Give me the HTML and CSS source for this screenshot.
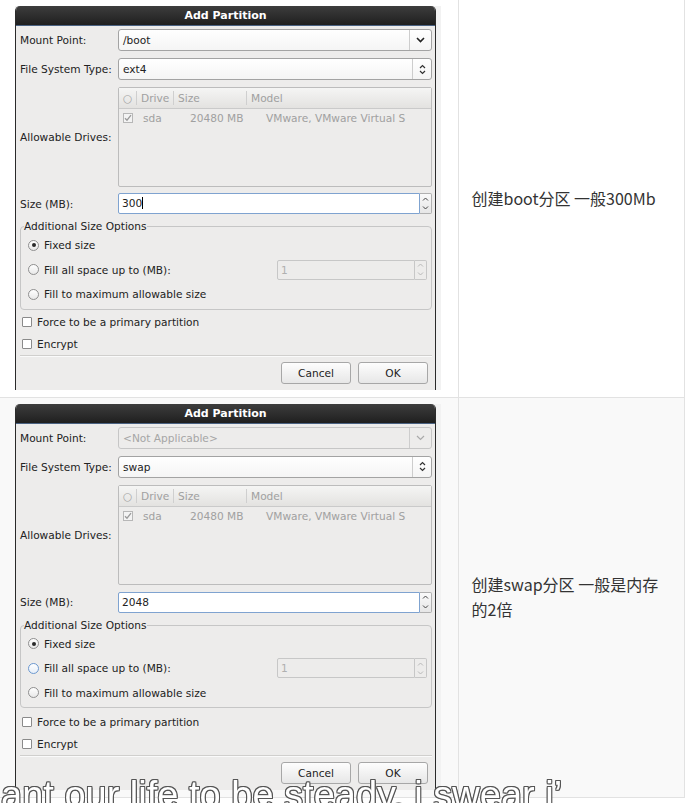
FILE: index.html
```html
<!DOCTYPE html>
<html lang="zh-CN">
<head>
    <meta charset="UTF-8">
    <meta name="viewport" content="width=device-width, initial-scale=1.0">
    <title>分区步骤</title>
    <link rel="stylesheet" href="styles.css">
</head>
<body>
    <table class="steps">
        <colgroup>
            <col class="col-pic">
            <col class="col-note">
        </colgroup>
        <tr>
            <td class="pic">
                <div class="shot">
                    <div class="dlg">
                        <div class="dlg-title">Add Partition</div>
                        <div class="dlg-body">
                            <div class="field">
                                <span class="lbl">Mount Point:</span>
                                <div class="combo">
                                    <span class="combo-text">/boot</span>
                                    <span class="combo-btn"><svg width="9" height="6" viewBox="0 0 9 6"><path d="M1 1l3.5 3.5L8 1" fill="none" stroke="#222" stroke-width="1.6"/></svg></span>
                                </div>
                            </div>
                            <div class="field">
                                <span class="lbl">File System Type:</span>
                                <div class="combo">
                                    <span class="combo-text">ext4</span>
                                    <span class="combo-btn narrow"><svg width="7" height="11" viewBox="0 0 7 11"><path d="M1 4l2.5-2.5L6 4M1 7l2.5 2.5L6 7" fill="none" stroke="#333" stroke-width="1.2"/></svg></span>
                                </div>
                            </div>
                            <div class="field">
                                <span class="lbl">Allowable Drives:</span>
                                <div class="drives">
                                    <div class="drives-head">
                                        <span class="h-radio">○</span>
                                        <span class="h-cell h-drive">Drive</span>
                                        <span class="h-cell h-size">Size</span>
                                        <span class="h-cell">Model</span>
                                    </div>
                                    <div class="drives-row">
                                        <span class="tick"><svg width="8" height="8" viewBox="0 0 8 8"><path d="M1 4.2l2 2L7 1.2" fill="none" stroke="#9a9a9a" stroke-width="1.3"/></svg></span>
                                        <span class="d-name">sda</span>
                                        <span class="d-size">20480 MB</span>
                                        <span>VMware, VMware Virtual S</span>
                                    </div>
                                </div>
                            </div>
                            <div class="field size-field">
                                <span class="lbl">Size (MB):</span>
                                <div class="spin">
                                    <span class="spin-field">300<i class="caret"></i></span>
                                    <span class="spin-arrows">
                                        <svg width="7" height="4" viewBox="0 0 7 4"><path d="M1 3.5l2.5-2.5L6 3.5" fill="none" stroke="#444" stroke-width="1"/></svg>
                                        <svg width="7" height="4" viewBox="0 0 7 4"><path d="M1 .5l2.5 2.5L6 .5" fill="none" stroke="#444" stroke-width="1"/></svg>
                                    </span>
                                </div>
                            </div>
                            <fieldset class="frame">
                                <legend>Additional Size Options</legend>
                                <div class="opt"><span class="radio on"></span>Fixed size</div>
                                <div class="opt">
                                    <span class="radio"></span>Fill all space up to (MB):
                                    <div class="spin off">
                                        <span class="spin-field">1</span>
                                        <span class="spin-arrows">
                                            <svg width="7" height="4" viewBox="0 0 7 4"><path d="M1 3.5l2.5-2.5L6 3.5" fill="none" stroke="#b8b8b8" stroke-width="1"/></svg>
                                            <svg width="7" height="4" viewBox="0 0 7 4"><path d="M1 .5l2.5 2.5L6 .5" fill="none" stroke="#b8b8b8" stroke-width="1"/></svg>
                                        </span>
                                    </div>
                                </div>
                                <div class="opt"><span class="radio"></span>Fill to maximum allowable size</div>
                            </fieldset>
                            <div class="check first"><span class="box"></span>Force to be a primary partition</div>
                            <div class="check"><span class="box"></span>Encrypt</div>
                            <div class="buttons">
                                <span class="btn">Cancel</span>
                                <span class="btn">OK</span>
                            </div>
                        </div>
                    </div>
                </div>
            </td>
            <td class="note">创建boot分区 一般300Mb</td>
        </tr>
        <tr>
            <td class="pic">
                <div class="shot">
                    <div class="dlg tall">
                        <div class="dlg-title">Add Partition</div>
                        <div class="dlg-body">
                            <div class="field">
                                <span class="lbl">Mount Point:</span>
                                <div class="combo off">
                                    <span class="combo-text">&lt;Not Applicable&gt;</span>
                                    <span class="combo-btn"><svg width="9" height="6" viewBox="0 0 9 6"><path d="M1 1l3.5 3.5L8 1" fill="none" stroke="#aaa" stroke-width="1.2"/></svg></span>
                                </div>
                            </div>
                            <div class="field">
                                <span class="lbl">File System Type:</span>
                                <div class="combo">
                                    <span class="combo-text">swap</span>
                                    <span class="combo-btn narrow"><svg width="7" height="11" viewBox="0 0 7 11"><path d="M1 4l2.5-2.5L6 4M1 7l2.5 2.5L6 7" fill="none" stroke="#333" stroke-width="1.2"/></svg></span>
                                </div>
                            </div>
                            <div class="field">
                                <span class="lbl">Allowable Drives:</span>
                                <div class="drives">
                                    <div class="drives-head">
                                        <span class="h-radio">○</span>
                                        <span class="h-cell h-drive">Drive</span>
                                        <span class="h-cell h-size">Size</span>
                                        <span class="h-cell">Model</span>
                                    </div>
                                    <div class="drives-row">
                                        <span class="tick"><svg width="8" height="8" viewBox="0 0 8 8"><path d="M1 4.2l2 2L7 1.2" fill="none" stroke="#9a9a9a" stroke-width="1.3"/></svg></span>
                                        <span class="d-name">sda</span>
                                        <span class="d-size">20480 MB</span>
                                        <span>VMware, VMware Virtual S</span>
                                    </div>
                                </div>
                            </div>
                            <div class="field size-field">
                                <span class="lbl">Size (MB):</span>
                                <div class="spin">
                                    <span class="spin-field">2048</span>
                                    <span class="spin-arrows">
                                        <svg width="7" height="4" viewBox="0 0 7 4"><path d="M1 3.5l2.5-2.5L6 3.5" fill="none" stroke="#444" stroke-width="1"/></svg>
                                        <svg width="7" height="4" viewBox="0 0 7 4"><path d="M1 .5l2.5 2.5L6 .5" fill="none" stroke="#444" stroke-width="1"/></svg>
                                    </span>
                                </div>
                            </div>
                            <fieldset class="frame">
                                <legend>Additional Size Options</legend>
                                <div class="opt"><span class="radio on"></span>Fixed size</div>
                                <div class="opt">
                                    <span class="radio hover"></span>Fill all space up to (MB):
                                    <div class="spin off">
                                        <span class="spin-field">1</span>
                                        <span class="spin-arrows">
                                            <svg width="7" height="4" viewBox="0 0 7 4"><path d="M1 3.5l2.5-2.5L6 3.5" fill="none" stroke="#b8b8b8" stroke-width="1"/></svg>
                                            <svg width="7" height="4" viewBox="0 0 7 4"><path d="M1 .5l2.5 2.5L6 .5" fill="none" stroke="#b8b8b8" stroke-width="1"/></svg>
                                        </span>
                                    </div>
                                </div>
                                <div class="opt"><span class="radio"></span>Fill to maximum allowable size</div>
                            </fieldset>
                            <div class="check first"><span class="box"></span>Force to be a primary partition</div>
                            <div class="check"><span class="box"></span>Encrypt</div>
                            <div class="buttons">
                                <span class="btn">Cancel</span>
                                <span class="btn">OK</span>
                            </div>
                        </div>
                    </div>
                </div>
            </td>
            <td class="note">创建swap分区 一般是内存的2倍</td>
        </tr>
    </table>

    <div class="lyric">ant our life to be steady, i swear i’</div>
</body>
</html>
```

FILE: styles.css
```css
body {
    margin: 0;
    background: #fff;
    font-family: "Noto Sans CJK SC", sans-serif;
}

.steps {
    border-collapse: collapse;
    table-layout: fixed;
    width: 684px;
}

.col-pic {
    width: 458px;
}

.col-note {
    width: 226px;
}

.steps td {
    padding: 6px 15px 7px;
    vertical-align: middle;
    border-right: 1px solid #e2e2e2;
    border-bottom: 1px solid #e2e2e2;
}

.steps tr:nth-child(even) td {
    background: #f9f9f9;
}

.steps td.note {
    padding: 0 16px 0 13px;
    font-size: 16px;
    line-height: 25px;
    color: #333;
}

/* screenshot of the installer dialog */
.shot {
    width: 426px;
    padding-right: 5px;
    box-sizing: border-box;
    background: #f2f2f2;
}

.dlg {
    width: 421px;
    box-sizing: border-box;
    border-left: 1px solid #2a2a2a;
    border-right: 1px solid #2a2a2a;
    border-radius: 5px 5px 0 0;
    overflow: hidden;
    background: #edeceb;
    font-family: "DejaVu Sans", sans-serif;
    font-size: 10.6px;
    color: #222;
}

.dlg-title {
    height: 20px;
    line-height: 20px;
    text-align: center;
    font-size: 11px;
    font-weight: bold;
    color: #fff;
    background: linear-gradient(#3d3d3d, #1f1f1f);
    border-bottom: 1px solid #4a6282;
    box-sizing: border-box;
}

.dlg-body {
    padding: 3px 3px 6px 4px;
}

.field {
    display: flex;
    align-items: center;
    margin-bottom: 7px;
}

.size-field {
    margin-bottom: 0;
    margin-top: -1px;
}

.tall .size-field {
    margin-top: 1px;
}

.lbl {
    flex: none;
    width: 98px;
}

.combo {
    flex: 1;
    display: flex;
    height: 22px;
    box-sizing: border-box;
    border: 1px solid #a3a3a3;
    border-radius: 3px;
    background: linear-gradient(#fff, #f5f5f5);
}

.combo.off {
    background: #edeceb;
    border-color: #c6c6c6;
    color: #a6a6a6;
}

.combo-text {
    flex: 1;
    padding-left: 4px;
    line-height: 20px;
}

.combo-btn {
    width: 21px;
    display: flex;
    align-items: center;
    justify-content: center;
    border-left: 1px solid #cdcdcd;
}

.combo-btn.narrow {
    width: 18px;
}

.drives {
    flex: 1;
    height: 100px;
    box-sizing: border-box;
    border: 1px solid #bcbcbc;
    border-radius: 2px;
    background: #edeceb;
    color: #a0a0a0;
}

.drives-head {
    display: flex;
    align-items: center;
    height: 21px;
    box-sizing: border-box;
    border-bottom: 1px solid #cacaca;
    background: linear-gradient(#f5f5f4, #e3e2e0);
}

.h-radio {
    width: 17px;
    text-align: center;
}

.h-cell {
    border-left: 1px solid #cfcfcf;
    padding-left: 4px;
    line-height: 14px;
}

.h-drive {
    width: 32px;
}

.h-size {
    width: 68px;
}

.drives-row {
    display: flex;
    align-items: center;
    height: 18px;
    padding-left: 4px;
}

.tick {
    width: 10px;
    height: 10px;
    box-sizing: border-box;
    border: 1px solid #b7b7b7;
    background: #f3f3f3;
    display: flex;
    align-items: center;
    justify-content: center;
}

.d-name {
    margin-left: 10px;
    width: 47px;
}

.d-size {
    width: 76px;
}

.spin {
    flex: 1;
    display: flex;
    height: 21px;
}

.spin-field {
    flex: 1;
    box-sizing: border-box;
    border: 1px solid #7fa3d0;
    border-radius: 2px 0 0 2px;
    background: #fff;
    padding-left: 3px;
    line-height: 19px;
}

.caret {
    display: inline-block;
    width: 1px;
    height: 12px;
    background: #000;
    vertical-align: -2px;
}

.spin-arrows {
    width: 12px;
    box-sizing: border-box;
    display: flex;
    flex-direction: column;
    align-items: center;
    justify-content: space-around;
    border: 1px solid #b0b0b0;
    border-left: none;
    border-radius: 0 2px 2px 0;
    background: linear-gradient(#fafafa, #e6e6e6);
}

.spin.off {
    flex: none;
    width: 150px;
    height: 20px;
    margin-left: auto;
}

.spin.off .spin-field {
    background: #edeceb;
    border-color: #c7c7c7;
    color: #b0b0b0;
}

.spin.off .spin-arrows {
    border-color: #c7c7c7;
    background: #edeceb;
}

.frame {
    margin: 6px 0 0;
    padding: 0 4px 2px 7px;
    border: 1px solid #c6c6c6;
    border-radius: 4px;
}

.frame legend {
    padding: 0;
    margin-left: -4px;
    line-height: 13px;
}

.opt {
    display: flex;
    align-items: center;
    height: 24.5px;
}

.radio {
    flex: none;
    width: 11px;
    height: 11px;
    box-sizing: border-box;
    margin-right: 5px;
    border: 1px solid #8f8f8f;
    border-radius: 50%;
    background: linear-gradient(#fff, #e8e8e8);
    display: flex;
    align-items: center;
    justify-content: center;
}

.radio.on::after {
    content: "";
    width: 4px;
    height: 4px;
    border-radius: 50%;
    background: #2a2a2a;
}

.radio.hover {
    border-color: #6c98cf;
    background: linear-gradient(#fff, #e6eef8);
}

.check {
    display: flex;
    align-items: center;
    height: 22px;
    padding-left: 2px;
}

.check.first {
    margin-top: 1px;
}

.tall .check.first {
    margin-top: 3px;
}

.box {
    width: 10px;
    height: 10px;
    box-sizing: border-box;
    margin-right: 5px;
    border: 1px solid #8a8a8a;
    border-radius: 1px;
    background: #fff;
}

.buttons {
    display: flex;
    justify-content: flex-end;
    gap: 7px;
    padding: 6px 4px 0 0;
    border-top: 1px solid #d0cfcd;
    box-shadow: inset 0 1px 0 #fafafa;
}

.btn {
    width: 70px;
    height: 22px;
    box-sizing: border-box;
    border: 1px solid #a7a7a7;
    border-radius: 3px;
    background: linear-gradient(#fdfdfd, #e7e7e7);
    text-align: center;
    line-height: 20px;
}

/* floating lyric bar from the player */
.lyric {
    position: fixed;
    left: 1px;
    top: 776px;
    font-family: "Liberation Sans", sans-serif;
    font-size: 38px;
    line-height: 1;
    white-space: nowrap;
    color: #fff;
    text-shadow: -1px 0 #555, 1px 0 #555, 0 -1px #555, 0 1px #555,
        -1px -1px #555, 1px 1px #555, -1px 1px #555, 1px -1px #555;
}
```
